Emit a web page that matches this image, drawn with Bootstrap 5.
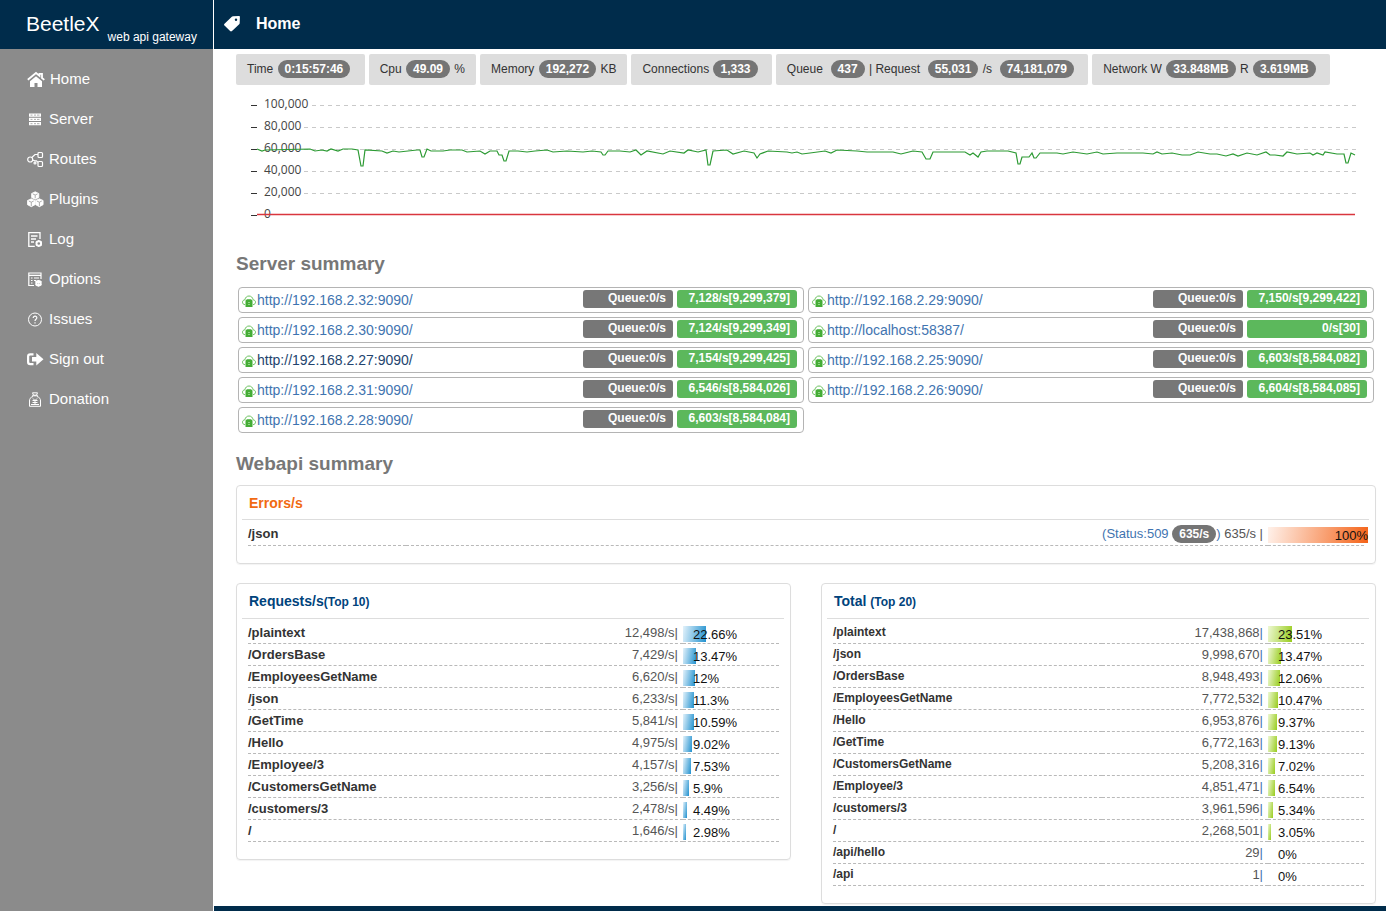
<!DOCTYPE html>
<html lang="en">
<head>
<meta charset="utf-8">
<meta name="viewport" content="width=device-width, initial-scale=1">
<title>BeetleX web api gateway</title>
<link href="https://cdn.jsdelivr.net/npm/bootstrap@5.3.0/dist/css/bootstrap.min.css" rel="stylesheet">
<script src="https://cdn.jsdelivr.net/npm/bootstrap@5.3.0/dist/js/bootstrap.bundle.min.js" defer></script>
<style>
  body { font-family: "Liberation Sans", Arial, sans-serif; font-size: 13px; color: #333; background: #fff; }
  a { color: #3f74b0; text-decoration: none; }
  .side { width: 213px; background: #8b8b8b; }
  .topbar { height: 49px; background: #002c4b; color: #fff; }
  .brand-name { font-size: 21px; line-height: 24px; padding-top: 12px; }
  .brand-note { font-size: 12px; line-height: 16px; padding-bottom: 4px; }
  .brand { padding-left: 26px; gap: 8px; color: #fff; }
  .page-head { padding: 0 8px 2px; gap: 16px; }
  .page-title { font-size: 16px; line-height: 20px; }
  .side-nav { padding-top: 10px; }
  .side-nav a { height: 40px; padding: 0 0 0 27px; gap: 5px; font-size: 15px; color: #fff; }
  .side-nav svg { width: 17px; height: 17px; flex: none; }
  .side-nav .wide { width: 18px; }
  .content-col { margin-left: 1px; }
  .content-pad { padding: 5px 10px 2px 22px; }
  .stat-list { gap: 4px; }
  .stat { background: #ddd; border-radius: 2px; padding: 0 11px; font-size: 12px; line-height: 31px; white-space: pre; }
  .stat-end { padding-right: 10px; }
  .stat .pill { margin: 0 1px; }
  .pill { display: inline-block; background: #757575; color: #fff; font-weight: 700; font-size: 12px; line-height: 18px; padding: 0 7px; border-radius: 9px; }
  .section-title { font-size: 19px; line-height: 24px; font-weight: 700; color: #777; margin: 16px 0 9px; }
  .chart text { font: 12px "Open Sans", "Noto Sans", sans-serif; fill: #444; }
  .server-list { display: grid; grid-template-columns: 1fr 1fr; gap: 4px; padding: 2px 2px 3px; margin: 0; }
  .server { height: 26px; border: 1px solid #b4b4b4; border-radius: 4px; padding: 2px 6px 0 3px; gap: 4px; }
  .server a { font-size: 14px; line-height: 20px; }
  .server a.current { color: #23446e; }
  .server svg { width: 14px; height: 14px; margin: 4px 1px 0 0; vertical-align: top; }
  .tag-box { height: 18px; border-radius: 3px; color: #fff; font-size: 12px; line-height: 16px; font-weight: 700; text-align: right; padding-right: 7px; }
  .tag-queue { width: 90px; background: #777; }
  .tag-rate { width: 120px; background: #5cb85c; }
  .panel { border: 1px solid #ddd; border-radius: 4px; box-shadow: 0 1px 1px rgba(0,0,0,.05); padding-bottom: 17px; }
  .panel h3 { font-size: 14px; line-height: 31px; font-weight: 700; color: #00437c; margin: 0 6px 3px 5px; padding: 2px 7px 0; border-bottom: 1px solid #ddd; }
  .panel h3 small { font-size: 12px; font-weight: 700; }
  .panel-error h3 { color: #f16a12; }
  .api-wrap { padding: 0 11px; }
  .api { width: 100%; border-collapse: separate; border-spacing: 0; }
  .api tr > * { height: 22px; padding: 0; line-height: 21px; border-bottom: 1px dashed #b9b9b9; vertical-align: top; }
  .panel-error .api tr > * { height: 23px; line-height: 22px; }
  .api th { font-weight: 700; }
  .api .num { text-align: right; padding-right: 5px; color: #555; }
  .api .num i { font-style: normal; color: #3f74b0; }
  .api .share-cell { width: 96px; }
  .small-names th { font-size: 12px; }
  .share { position: relative; width: 100px; height: 16px; margin: 4px -4px 0 0; }
  .share b { display: block; height: 16px; background: linear-gradient(100deg, #e3f2fb, #2191cf); }
  .share span { position: absolute; left: 10px; top: 0; line-height: 18px; color: #111; }
  .green .share b { background: linear-gradient(100deg, #eef8d4, #98cc1c); }
  .panel-error .share b { background: linear-gradient(100deg, #fff1ea, #f46318); }
  .panel-error .share span { left: auto; right: 0; }
  .pair { --bs-gutter-x: 30px; margin-top: 19px; }
  .foot { height: 5px; background: #002c4b; }
</style>
</head>
<body>
<svg class="d-none" aria-hidden="true">
  <symbol id="cloud" viewBox="0 0 14 14">
    <path d="M3 10.700C1.200 10.500.5 9.400.5 8.200.5 6.800 1.500 5.900 2.900 5.800 3.300 3.400 4.900 2 7 2s3.700 1.400 4.100 3.800c1.400.1 2.400 1 2.400 2.400 0 1.200-.7 2.200-2.500 2.500" fill="none" stroke="#6cc35f" stroke-width="1"/>
    <path d="M3.500 6.500 5 5.300h4l1.500 1.200V13h-7z" fill="#45ad36"/>
    <path d="M6 8.500h2M6 10.500h2" stroke="#8fd283" stroke-width="1"/>
  </symbol>
</svg>
<div class="d-flex min-vh-100">
  <aside class="side flex-shrink-0">
    <div class="topbar d-flex brand">
      <span class="brand-name">BeetleX</span><span class="brand-note align-self-end">web api gateway</span>
    </div>
    <nav class="side-nav nav flex-column">
      <a class="nav-link d-flex align-items-center" href="#"><svg class="wide" viewBox="0 0 18 17"><path d="M.8 8.800 9 2l3.500 2.900V2.800H15V7l2.300 1.900" fill="none" stroke="#fff" stroke-width="1.800"/><path d="M9 5.300 3 10.200V16h4.500v-4h3v4H15v-5.800z" fill="#fff"/></svg>Home</a>
      <a class="nav-link d-flex align-items-center" href="#"><svg viewBox="0 0 17 17"><path d="M2 2.500h12v3.200H2zM2 6.800h12V10H2zM2 11.100h12v3.200H2z" fill="#fff"/><path d="M3.500 4.100h2m1.500 0h2m1 0h2.500M3.500 8.400h2m1.500 0h2m1 0h2.500M3.500 12.700h2m1.500 0h2m1 0h2.500" stroke="#8b8b8b" stroke-width=".7"/></svg>Server</a>
      <a class="nav-link d-flex align-items-center" href="#"><svg viewBox="0 0 17 17" fill="none" stroke="#fff" stroke-width="1.200"><circle cx="3.200" cy="8.500" r="2.500"/><circle cx="8" cy="12" r="1"/><rect x="11" y="1.500" width="4.500" height="5" rx="1"/><rect x="11" y="10.500" width="4.500" height="5" rx="1"/><path d="M4.800 6.500 8 3.500h3M5.700 9l2 .8H9.500l1.500 1.500"/></svg>Routes</a>
      <a class="nav-link d-flex align-items-center" href="#"><svg viewBox="0 0 17 17"><path d="m8.200.8 3.600 1.700v4L8.200 8.300 4.600 6.500v-4zM4.300 7.800 8 9.500v4.200l-3.700 2-3.800-2V9.500zM12.400 7.800l3.700 1.700v4.200l-3.700 2-3.800-2V9.500z" fill="#fff" stroke="#fff" stroke-width=".8" stroke-linejoin="round"/><path d="m5.800 2.900 2.400 1.100 2.400-1.100M8.200 4.200v3M1.800 10l2.500 1.200L6.700 10M4.300 11.300V15M9.900 10l2.500 1.200 2.400-1.200M12.400 11.300V15" fill="none" stroke="#8b8b8b" stroke-width=".7"/></svg>Plugins</a>
      <a class="nav-link d-flex align-items-center" href="#"><svg viewBox="0 0 17 17" fill="none" stroke="#fff" stroke-width="1.300"><path d="M13 8V1.600H1.800v13.800h6M4 5h6.500M4 8h5M4 11h3"/><circle cx="11.800" cy="12.500" r="2.300" stroke-width="1.900"/><path d="M11.800 9v1M11.800 15v1M8.800 10.800l1 .6M13.800 13.700l1 .6M14.800 10.800l-1 .6M9.800 13.700l-1 .6" stroke-width="1.200"/></svg>Log</a>
      <a class="nav-link d-flex align-items-center" href="#"><svg viewBox="0 0 17 17" fill="none" stroke="#fff" stroke-width="1.200"><path d="M14 8V2H1.800v12.500H7M1.800 4.300H14M4 7h1.500M7 7h5M4 9.500h1.500M7 9.500h2M4 12h1.500"/><circle cx="11.500" cy="12.300" r="2.200" stroke-width="2"/><path d="M11.500 9v6.500M8.500 10.500l6 3.600M14.500 10.500l-6 3.600"/></svg>Options</a>
      <a class="nav-link d-flex align-items-center" href="#"><svg viewBox="0 0 17 17" fill="none" stroke="#fff"><circle cx="8" cy="8.500" r="6.500"/><path d="M6.200 7c0-2.500 3.800-2.300 3.600 0C9.700 8.300 8 8.300 8 10M8 11.200v1.300" stroke-width="1.200"/></svg>Issues</a>
      <a class="nav-link d-flex align-items-center" href="#"><svg viewBox="0 0 17 17"><path d="M6.500 3.400H3.300C1.800 3.400 1.100 4.200 1.100 5.500v5.500c0 1.400.7 2.100 2.200 2.100h3.200" fill="none" stroke="#fff" stroke-width="2.200"/><path d="M9.300 2 16.500 8.300 9.300 14.600v-4H5V6h4.300z" fill="#fff"/></svg>Sign out</a>
      <a class="nav-link d-flex align-items-center" href="#"><svg viewBox="0 0 17 17" fill="none" stroke="#fff"><path d="M5.500 1.800h5L9.500 4.200h-3zM5 4.800h6M6 5.500C3 6.500 2.500 8 2.500 10v5.300h11V10c0-2-.5-3.500-3.500-4.500M6 7.500l2 2 2-2M5.500 9.500h5M5.500 11.500h5M8 9.500V13M4 13.500h8"/></svg>Donation</a>
    </nav>
  </aside>

  <div class="content-col d-flex flex-column flex-grow-1">
    <header class="topbar page-head d-flex align-items-center">
      <svg width="18" height="18" viewBox="0 0 18 18" aria-hidden="true"><path d="M11 1.200 16.800.9c.8 0 1.100.3 1.100 1L17.700 8c0 .5-.2.900-.5 1.200L10 16.100c-.7.6-1.300.6-1.900 0L2.500 10.600c-.6-.6-.6-1.300 0-1.900l7.300-7c.3-.3.700-.5 1.200-.5z" fill="#fff"/><circle cx="14" cy="4.800" r="1.200" fill="#002c4b"/></svg>
      <h1 class="page-title fw-bold m-0">Home</h1>
    </header>
    <main class="content-pad">
      <div class="stat-list d-flex flex-wrap">
        <div class="stat stat-end">Time <span class="pill">0:15:57:46</span> </div>
        <div class="stat">Cpu <span class="pill">49.09</span> %</div>
        <div class="stat">Memory <span class="pill">192,272</span> KB</div>
        <div class="stat stat-end">Connections <span class="pill">1,333</span> </div>
        <div class="stat stat-end">Queue  <span class="pill">437</span> | Request  <span class="pill">55,031</span> /s  <span class="pill">74,181,079</span> </div>
        <div class="stat stat-end">Network W <span class="pill">33.848MB</span> R <span class="pill">3.619MB</span> </div>
      </div>

      <svg class="chart d-block w-100" viewBox="0 -1 1140 151" role="img" aria-label="Requests per second">
        <g stroke="#c9c9c9" stroke-dasharray="4 4">
          <path d="M76 19.500H1122M68 41.500H1122M68 63.500H1122M68 85.500H1122M68 107.500H1122"/>
        </g>
        <path d="M15 19.500h6M15 41.500h6M15 63.500h6M15 85.500h6M15 107.500h6M15 129.500h6" stroke="#333"/>
        <text x="28" y="22">100,000</text><text x="28" y="44">80,000</text><text x="28" y="66">60,000</text><text x="28" y="88">40,000</text><text x="28" y="110">20,000</text><text x="28" y="132">0</text>
        <path d="M21 128.500H1119" stroke="#d9363e" stroke-width="1.500"/>
        <polyline fill="none" stroke="#2c9a33" stroke-width="1.200" points="21,63 26,65 29,64 74,63 79,65 86,64 91,65 95,63 102,65 107,63 116,63 122,64 125,80 127,80 129,64 146,65 151,67 157,65 163,66 181,64 184,64 186,71 188,71 191,63 195,65 202,65 207,65 214,64 226,64 231,66 244,65 249,68 254,65 261,65 263,69 266,69 268,75 270,75 273,65 282,65 291,66 299,65 311,64 317,66 331,65 347,66 356,65 365,66 367,69 369,69 372,65 384,65 394,66 400,64 405,69 411,65 427,68 434,65 448,67 452,64 462,66 470,64 472,79 474,79 477,65 491,64 497,68 508,65 518,67 521,72 524,68 532,65 551,66 556,67 561,66 566,68 574,67 589,65 595,67 601,64 621,65 631,66 657,66 665,68 677,65 686,66 690,73 694,73 697,66 729,66 734,69 737,67 742,71 745,66 751,65 772,65 780,67 782,78 784,78 786,71 793,71 796,67 798,72 800,72 804,67 821,67 827,68 837,66 851,68 861,66 867,68 881,67 907,67 917,68 921,66 926,68 936,67 946,69 954,69 962,66 974,68 981,68 990,70 997,68 1002,70 1011,67 1021,69 1030,66 1034,69 1039,69 1047,70 1051,66 1061,68 1074,67 1077,69 1081,67 1087,69 1089,66 1101,68 1108,68 1110,77 1112,77 1115,67 1119,69"/>
      </svg>

      <h2 class="section-title">Server summary</h2>
      <ul class="server-list list-unstyled">
        <li class="server d-flex"><a class="me-auto" href="#"><svg aria-hidden="true"><use href="#cloud"/></svg>http://192.168.2.32:9090/</a><span class="tag-box tag-queue">Queue:0/s</span><span class="tag-box tag-rate">7,128/s[9,299,379]</span></li>
        <li class="server d-flex"><a class="me-auto" href="#"><svg aria-hidden="true"><use href="#cloud"/></svg>http://192.168.2.29:9090/</a><span class="tag-box tag-queue">Queue:0/s</span><span class="tag-box tag-rate">7,150/s[9,299,422]</span></li>
        <li class="server d-flex"><a class="me-auto" href="#"><svg aria-hidden="true"><use href="#cloud"/></svg>http://192.168.2.30:9090/</a><span class="tag-box tag-queue">Queue:0/s</span><span class="tag-box tag-rate">7,124/s[9,299,349]</span></li>
        <li class="server d-flex"><a class="me-auto" href="#"><svg aria-hidden="true"><use href="#cloud"/></svg>http://localhost:58387/</a><span class="tag-box tag-queue">Queue:0/s</span><span class="tag-box tag-rate">0/s[30]</span></li>
        <li class="server d-flex"><a class="me-auto current" href="#"><svg aria-hidden="true"><use href="#cloud"/></svg>http://192.168.2.27:9090/</a><span class="tag-box tag-queue">Queue:0/s</span><span class="tag-box tag-rate">7,154/s[9,299,425]</span></li>
        <li class="server d-flex"><a class="me-auto" href="#"><svg aria-hidden="true"><use href="#cloud"/></svg>http://192.168.2.25:9090/</a><span class="tag-box tag-queue">Queue:0/s</span><span class="tag-box tag-rate">6,603/s[8,584,082]</span></li>
        <li class="server d-flex"><a class="me-auto" href="#"><svg aria-hidden="true"><use href="#cloud"/></svg>http://192.168.2.31:9090/</a><span class="tag-box tag-queue">Queue:0/s</span><span class="tag-box tag-rate">6,546/s[8,584,026]</span></li>
        <li class="server d-flex"><a class="me-auto" href="#"><svg aria-hidden="true"><use href="#cloud"/></svg>http://192.168.2.26:9090/</a><span class="tag-box tag-queue">Queue:0/s</span><span class="tag-box tag-rate">6,604/s[8,584,085]</span></li>
        <li class="server d-flex"><a class="me-auto" href="#"><svg aria-hidden="true"><use href="#cloud"/></svg>http://192.168.2.28:9090/</a><span class="tag-box tag-queue">Queue:0/s</span><span class="tag-box tag-rate">6,603/s[8,584,084]</span></li>
      </ul>

      <h2 class="section-title">Webapi summary</h2>
      <section class="panel panel-error">
        <h3>Errors/s</h3>
        <div class="api-wrap">
          <table class="api">
            <tr><th scope="row">/json</th><td class="num"><a href="#">(Status:509 <span class="pill">635/s</span>)</a> 635/s |</td><td class="share-cell"><div class="share"><b style="width:100%"></b><span>100%</span></div></td></tr>
          </table>
        </div>
      </section>

      <div class="row pair align-items-start">
        <div class="col-6">
          <section class="panel">
            <h3>Requests/s<small>(Top 10)</small></h3>
            <div class="api-wrap">
              <table class="api">
                <tr><th scope="row">/plaintext</th><td class="num">12,498/s|</td><td class="share-cell"><div class="share"><b style="width:23%"></b><span>22.66%</span></div></td></tr>
                <tr><th scope="row">/OrdersBase</th><td class="num">7,429/s|</td><td class="share-cell"><div class="share"><b style="width:13%"></b><span>13.47%</span></div></td></tr>
                <tr><th scope="row">/EmployeesGetName</th><td class="num">6,620/s|</td><td class="share-cell"><div class="share"><b style="width:12%"></b><span>12%</span></div></td></tr>
                <tr><th scope="row">/json</th><td class="num">6,233/s|</td><td class="share-cell"><div class="share"><b style="width:11%"></b><span>11.3%</span></div></td></tr>
                <tr><th scope="row">/GetTime</th><td class="num">5,841/s|</td><td class="share-cell"><div class="share"><b style="width:11%"></b><span>10.59%</span></div></td></tr>
                <tr><th scope="row">/Hello</th><td class="num">4,975/s|</td><td class="share-cell"><div class="share"><b style="width:9%"></b><span>9.02%</span></div></td></tr>
                <tr><th scope="row">/Employee/3</th><td class="num">4,157/s|</td><td class="share-cell"><div class="share"><b style="width:8%"></b><span>7.53%</span></div></td></tr>
                <tr><th scope="row">/CustomersGetName</th><td class="num">3,256/s|</td><td class="share-cell"><div class="share"><b style="width:6%"></b><span>5.9%</span></div></td></tr>
                <tr><th scope="row">/customers/3</th><td class="num">2,478/s|</td><td class="share-cell"><div class="share"><b style="width:4%"></b><span>4.49%</span></div></td></tr>
                <tr><th scope="row">/</th><td class="num">1,646/s|</td><td class="share-cell"><div class="share"><b style="width:3%"></b><span>2.98%</span></div></td></tr>
              </table>
            </div>
          </section>
        </div>
        <div class="col-6">
          <section class="panel green">
            <h3>Total <small>(Top 20)</small></h3>
            <div class="api-wrap">
              <table class="api small-names">
                <tr><th scope="row">/plaintext</th><td class="num">17,438,868<i>|</i></td><td class="share-cell"><div class="share"><b style="width:24%"></b><span>23.51%</span></div></td></tr>
                <tr><th scope="row">/json</th><td class="num">9,998,670<i>|</i></td><td class="share-cell"><div class="share"><b style="width:13%"></b><span>13.47%</span></div></td></tr>
                <tr><th scope="row">/OrdersBase</th><td class="num">8,948,493<i>|</i></td><td class="share-cell"><div class="share"><b style="width:12%"></b><span>12.06%</span></div></td></tr>
                <tr><th scope="row">/EmployeesGetName</th><td class="num">7,772,532<i>|</i></td><td class="share-cell"><div class="share"><b style="width:10%"></b><span>10.47%</span></div></td></tr>
                <tr><th scope="row">/Hello</th><td class="num">6,953,876<i>|</i></td><td class="share-cell"><div class="share"><b style="width:9%"></b><span>9.37%</span></div></td></tr>
                <tr><th scope="row">/GetTime</th><td class="num">6,772,163<i>|</i></td><td class="share-cell"><div class="share"><b style="width:9%"></b><span>9.13%</span></div></td></tr>
                <tr><th scope="row">/CustomersGetName</th><td class="num">5,208,316<i>|</i></td><td class="share-cell"><div class="share"><b style="width:7%"></b><span>7.02%</span></div></td></tr>
                <tr><th scope="row">/Employee/3</th><td class="num">4,851,471<i>|</i></td><td class="share-cell"><div class="share"><b style="width:7%"></b><span>6.54%</span></div></td></tr>
                <tr><th scope="row">/customers/3</th><td class="num">3,961,596<i>|</i></td><td class="share-cell"><div class="share"><b style="width:5%"></b><span>5.34%</span></div></td></tr>
                <tr><th scope="row">/</th><td class="num">2,268,501<i>|</i></td><td class="share-cell"><div class="share"><b style="width:3%"></b><span>3.05%</span></div></td></tr>
                <tr><th scope="row">/api/hello</th><td class="num">29<i>|</i></td><td class="share-cell"><div class="share"><b style="width:0%"></b><span>0%</span></div></td></tr>
                <tr><th scope="row">/api</th><td class="num">1<i>|</i></td><td class="share-cell"><div class="share"><b style="width:0%"></b><span>0%</span></div></td></tr>
              </table>
            </div>
          </section>
        </div>
      </div>
    </main>
    <footer class="foot mt-auto"></footer>
  </div>
</div>
</body>
</html>
